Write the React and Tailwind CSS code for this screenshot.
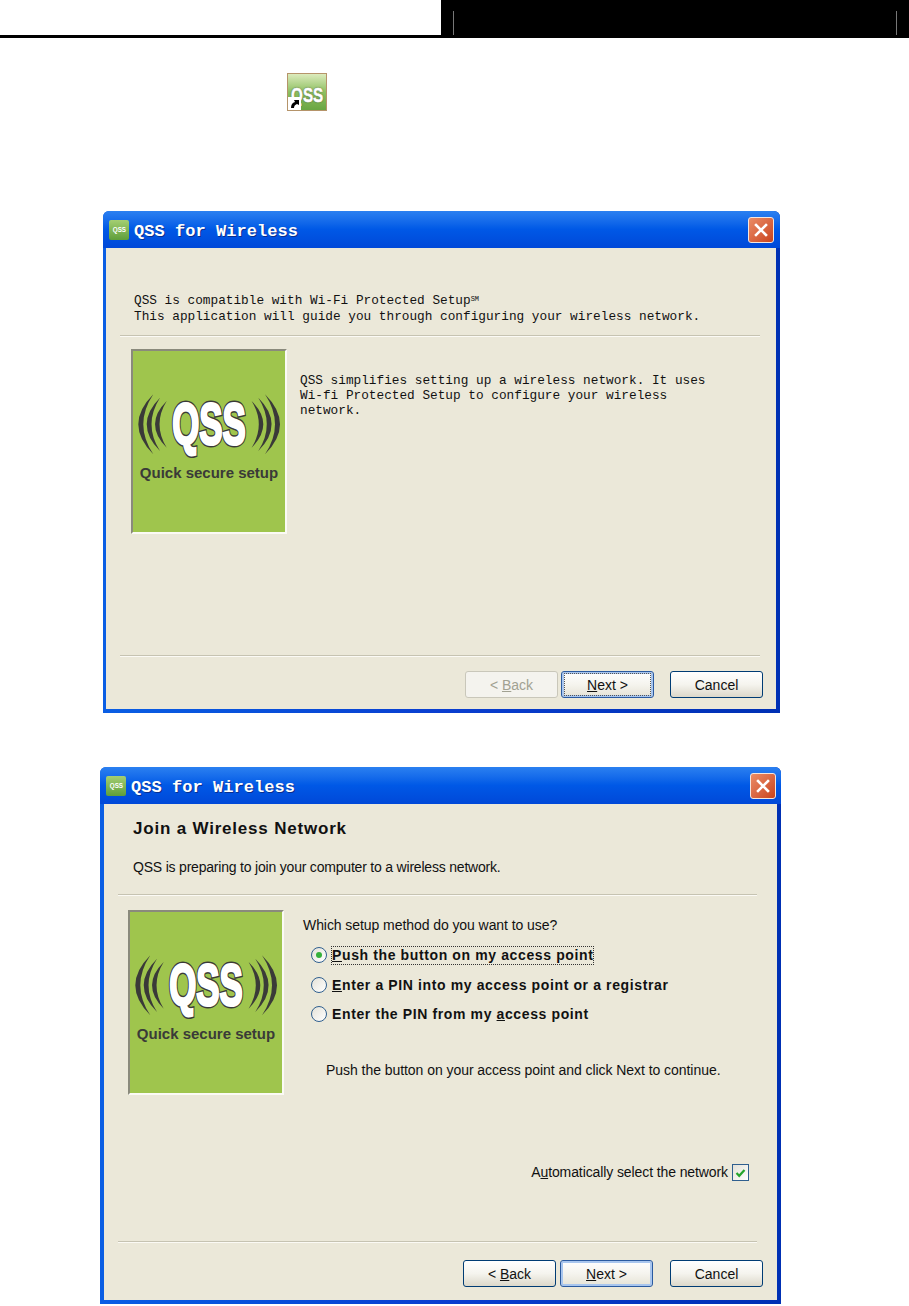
const sans = "font-['Liberation_Sans',Arial,sans-serif]";
const mono = "font-['Liberation_Mono','Courier_New',monospace]";

function CloseIcon() {
  return (
    <svg width="14" height="14" viewBox="0 0 14 14" fill="none" stroke="white" strokeWidth="2.6" strokeLinecap="square">
      <path d="M2 2 L12 12 M12 2 L2 12" />
    </svg>
  );
}

function TinyIcon() {
  return (
    <div className={`flex h-[20px] w-[20px] shrink-0 items-center justify-center rounded-[2px] bg-gradient-to-b from-[#a4cf72] to-[#5e9e3a] text-[7px] leading-none font-bold text-white ${sans}`}>
      <span className="scale-x-90">QSS</span>
    </div>
  );
}

function Logo() {
  const arcs = (
    <>
      <path d="M20.3 43.3 Q-9.7 73.3 20.3 103.3 Q0.3 73.3 20.3 43.3Z" />
      <path d="M27 46.7 Q0.4 73.3 27 100 Q10 73.3 27 46.7Z" />
      <path d="M33.7 50 Q10.3 73.3 33.7 96.7 Q19.3 73.3 33.7 50Z" />
    </>
  );
  const qss = {
    textAnchor: "middle",
    fontFamily: "'Liberation Sans', Arial, sans-serif",
    fontWeight: "700",
    fontSize: "58",
    transform: "translate(76 93) scale(0.6 1)",
  };
  return (
    <div className="h-[185px] w-[156px] shrink-0 border-2 border-t-[#8a8a7c] border-r-[#fbfaf5] border-b-[#fbfaf5] border-l-[#8a8a7c] bg-[#9fc54d]">
      <svg width="152" height="181" viewBox="0 0 152 181" className="block">
        <g fill="#3a3a38">{arcs}</g>
        <g fill="#3a3a38" transform="translate(152.3 0) scale(-1 1)">{arcs}</g>
        <text {...qss} fill="#3a3a38" stroke="#3a3a38" strokeWidth="6" aria-hidden="true">QSS</text>
        <text {...qss} fill="#ffffff" stroke="#ffffff" strokeWidth="3">QSS</text>
        <text
          x="76"
          y="127"
          textAnchor="middle"
          fontFamily="'Liberation Sans', Arial, sans-serif"
          fontWeight="700"
          fontSize="15"
          fill="#3a3a38"
        >
          Quick secure setup
        </text>
      </svg>
    </div>
  );
}

function Button({ children, variant = "normal", className = "" }) {
  const styles = {
    normal: "border-[#003c74] bg-gradient-to-b from-white via-[#f5f4ee] to-[#dcd8ca] text-[#111]",
    disabled: "border-[#c9c7ba] bg-[#f4f3ee] text-[#a1a192]",
    focused: "border-[#2a5aa0] bg-gradient-to-b from-white via-[#f5f4ee] to-[#e6e3d6] text-[#111] shadow-[inset_0_0_0_2px_#a9c6ee]",
  };
  return (
    <div className={`flex h-[27px] w-[93px] items-center justify-center rounded-[3px] border text-[14px] leading-none ${sans} ${styles[variant]} ${className}`}>
      {children}
    </div>
  );
}

function TitleBar({ closeClass }) {
  return (
    <div className="flex h-[37px] items-center rounded-t-[6px] bg-gradient-to-b from-[#2b80f0] via-[#0058e6] to-[#0048d8] pl-[6px]">
      <TinyIcon />
      <span className={`mt-[4px] ml-[5px] text-[17px] leading-none font-bold tracking-[0.05px] text-white [text-shadow:1px_1px_0_#0a2f8f] ${mono}`}>QSS for Wireless</span>
      <div className={`ml-auto flex h-[26px] w-[26px] items-center justify-center rounded-[3px] border border-[#f4e6de] bg-gradient-to-br from-[#ea8c66] to-[#c9421a] ${closeClass}`}>
        <CloseIcon />
      </div>
    </div>
  );
}

function Rule({ className = "" }) {
  return <div className={`h-[2px] border-t border-b border-t-[#c6c3b2] border-b-[#fbfaf5] ${className}`} />;
}

function Radio({ checked }) {
  return (
    <div className="flex h-[16px] w-[16px] shrink-0 items-center justify-center rounded-full border border-[#2f5f8f] bg-gradient-to-br from-[#e4e2d8] to-white">
      {checked && <div className="h-[6px] w-[6px] rounded-full bg-[#35b03a]" />}
    </div>
  );
}

function Option({ checked, children, className = "" }) {
  return (
    <div className={`flex h-[20px] items-center ${className}`}>
      <Radio checked={checked} />
      <span className={`ml-[5px] text-[14px] leading-[17px] font-bold tracking-[0.62px] whitespace-nowrap text-[#111] ${sans} ${checked ? "outline-1 outline-dotted outline-[#333]" : ""}`}>
        {children}
      </span>
    </div>
  );
}

function Window1() {
  return (
    <div className="ml-[103px] h-[502px] w-[677px] rounded-t-[6px] bg-gradient-to-r from-[#0a5ee4] via-[#0a3ed0] to-[#0030b4]">
      <TitleBar closeClass="mr-[6px]" />
      <div className="mr-[4px] ml-[3px] h-[461px] bg-[#ebe8d9]">
        <div className={`pt-[45px] pl-[28px] text-[12.75px] leading-[15.5px] text-[#111] ${mono}`}>
          <div className="whitespace-nowrap">QSS is compatible with Wi-Fi Protected Setup<sup className="text-[7px]">SM</sup></div>
          <div className="whitespace-nowrap">This application will guide you through configuring your wireless network.</div>
        </div>
        <Rule className="mt-[11px] mr-[16px] ml-[14px]" />
        <div className="mt-[12px] flex pl-[25px]">
          <Logo />
          <div className={`mt-[24px] ml-[13px] text-[12.75px] leading-[15px] whitespace-nowrap text-[#111] ${mono}`}>
            <div>QSS simplifies setting up a wireless network. It uses</div>
            <div>Wi-fi Protected Setup to configure your wireless</div>
            <div>network.</div>
          </div>
        </div>
        <Rule className="mt-[121px] mr-[16px] ml-[14px]" />
        <div className="mt-[14px] flex pl-[359px]">
          <Button variant="disabled"><span>&lt; <u>B</u>ack</span></Button>
          <Button variant="focused" className="ml-[3px]">
            <span className="flex h-[21px] w-[85px] items-center justify-center outline-1 outline-dotted outline-[#555]"><span><u>N</u>ext &gt;</span></span>
          </Button>
          <Button className="ml-[16px]">Cancel</Button>
        </div>
      </div>
    </div>
  );
}

function Window2() {
  return (
    <div className="mt-[54px] ml-[100px] h-[537px] w-[681px] rounded-t-[6px] bg-gradient-to-r from-[#0a5ee4] via-[#0a3ed0] to-[#0030b4]">
      <TitleBar closeClass="mr-[5px]" />
      <div className="mr-[4px] ml-[4px] h-[496px] bg-[#ebe8d9]">
        <div className={`pt-[16px] pl-[29px] text-[#111] ${sans}`}>
          <div className="text-[17px] leading-[18px] font-bold tracking-[0.8px] whitespace-nowrap">Join a Wireless Network</div>
          <div className="mt-[21px] text-[14px] leading-[17px] tracking-[-0.2px]">QSS is preparing to join your computer to a wireless network.</div>
        </div>
        <Rule className="mt-[18px] mr-[20px] ml-[14px]" />
        <div className="mt-[14px] flex pl-[24px]">
          <Logo />
          <div className={`ml-[19px] text-[14px] leading-[17px] whitespace-nowrap text-[#111] ${sans}`}>
            <div className="mt-[7px] tracking-[-0.07px]">Which setup method do you want to use?</div>
            <div className="mt-[11px] ml-[8px]">
              <Option checked><u>P</u>ush the button on my access point</Option>
              <Option className="mt-[10px]"><u>E</u>nter a PIN into my access point or a registrar</Option>
              <Option className="mt-[9px]">Enter the PIN from my <u>a</u>ccess point</Option>
            </div>
            <div className="mt-[38px] ml-[23px] tracking-[-0.05px]">Push the button on your access point and click Next to continue.</div>
          </div>
        </div>
        <div className={`mt-[69px] flex items-center justify-end pr-[28px] text-[14px] leading-[17px] tracking-[-0.1px] text-[#111] ${sans}`}>
          <span>A<u>u</u>tomatically select the network</span>
          <div className="ml-[4px] flex h-[17px] w-[17px] items-center justify-center border border-[#2f5f8f] bg-gradient-to-br from-[#e4e2d8] to-white">
            <svg width="11" height="10" viewBox="0 0 11 10" fill="none" stroke="#25a52d" strokeWidth="2.2">
              <path d="M1.5 5 L4.2 7.8 L9.5 2" />
            </svg>
          </div>
        </div>
        <Rule className="mt-[60px] mr-[20px] ml-[14px]" />
        <div className="mt-[17px] flex pl-[359px]">
          <Button><span>&lt; <u>B</u>ack</span></Button>
          <Button variant="focused" className="ml-[4px]"><span><u>N</u>ext &gt;</span></Button>
          <Button className="ml-[17px]">Cancel</Button>
        </div>
      </div>
    </div>
  );
}

export default function App() {
  return (
    <div className="h-[1306px] w-[909px] overflow-hidden bg-white">
      <div className="flex h-[38px]">
        <div className="w-[441px] border-b-[3px] border-black" />
        <div className="flex flex-1 items-end justify-between bg-black px-[12px] pb-[3px]">
          <div className="h-[24px] w-px bg-[#777]" />
          <div className="h-[24px] w-px bg-[#777]" />
        </div>
      </div>
      <div className="relative mt-[35px] ml-[287px] flex h-[38px] w-[40px] items-center justify-center border border-[#b5946a] bg-gradient-to-b from-[#dcebbc] via-[#8fc060] to-[#69a542]">
        <span className={`mt-[5px] scale-x-[0.76] text-[20px] leading-none font-bold text-white [-webkit-text-stroke:0.5px_white] [text-shadow:0_0_2px_#333] ${sans}`}>QSS</span>
        <div className="absolute bottom-0 left-0 flex h-[13px] w-[13px] items-center justify-center bg-white">
          <svg width="11" height="11" viewBox="0 0 11 11" fill="#000">
            <path d="M2 10 Q2 5 6 4 L5 2 L10 2 L10 7 L8 6 Q5 7 5 10Z" />
          </svg>
        </div>
      </div>
      <div className="mt-[100px]">
        <Window1 />
        <Window2 />
      </div>
    </div>
  );
}
